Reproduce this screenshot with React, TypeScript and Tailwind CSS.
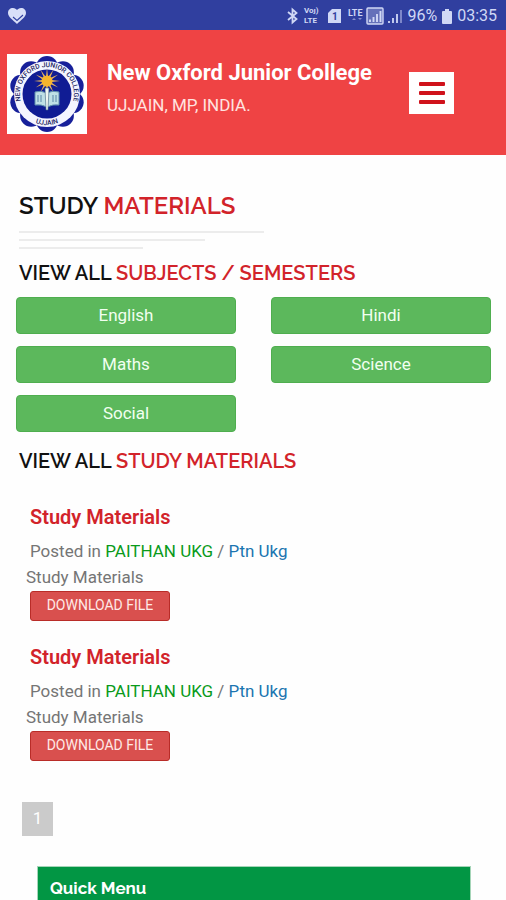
import React from "react";

const subjects = ["English", "Hindi", "Maths", "Science", "Social"];

const materials = [
  { id: 1, title: "Study Materials", group: "PAITHAN UKG", section: "Ptn Ukg", text: "Study Materials" },
  { id: 2, title: "Study Materials", group: "PAITHAN UKG", section: "Ptn Ukg", text: "Study Materials" },
];

const petals = Array.from({ length: 10 }, (_, i) => {
  const a = ((i * 36 - 90) * Math.PI) / 180;
  return { x: 40 + 27 * Math.cos(a), y: 40 + 27 * Math.sin(a) };
});

const rays = Array.from({ length: 12 }, (_, i) => i * 30);

function StatusBar() {
  return (
    <div className="flex h-[30px] items-center justify-between bg-[#303f9f] pl-2 pr-[9px] pt-[2px] text-[#d0d8f5]">
      <svg className="h-[17px] w-[18px]" viewBox="0 0 18 17" aria-hidden="true">
        <path
          d="M9 16 C5 12 0 9 0 5 C0 2 2 0 5 0 C7 0 8 1 9 2 C10 1 11 0 13 0 C16 0 18 2 18 5 C18 9 13 12 9 16Z"
          fill="#d8dff8"
        />
        <path d="M5 9 L9 12.500 L15 7" fill="none" stroke="#303f9f" strokeWidth="1.1" />
      </svg>
      <div className="flex items-center">
        <svg className="h-[18px] w-[119px] overflow-visible" viewBox="0 0 119 18" fill="none" aria-hidden="true">
          <path d="M2 5 L10.500 12 L6.500 15.500 V2.500 L10.500 6 L2 13" stroke="currentColor" strokeWidth="1.8" />
          <g fill="currentColor" fontFamily="Roboto, sans-serif" fontWeight="700">
            <text x="18" y="6" fontSize="8">Voȷ)</text>
            <text x="18" y="16" fontSize="8">LTE</text>
            <text x="62" y="9" fontSize="9">LTE</text>
          </g>
          <path d="M46 2 H55 V16 H42 V6Z" fill="currentColor" />
          <text x="46" y="13" fontSize="10" fontWeight="700" fontFamily="Roboto, sans-serif" fill="#303f9f">1</text>
          <path d="M66 13 L68 11 L70 13Z M72 11 H76 L74 13Z" fill="#8790ce" />
          <rect x="81" y="1" width="16" height="16" rx="1" fill="#6571ba" stroke="currentColor" strokeWidth="1.4" />
          <path d="M84 15 V12.500 M87.500 15 V10 M91 15 V7 M94.500 15 V4" stroke="currentColor" strokeWidth="1.9" />
          <path d="M103 16 V14 M107 16 V11 M111 16 V7" stroke="currentColor" strokeWidth="1.8" />
          <path d="M115 16 V3" stroke="#8790ce" strokeWidth="1.8" />
        </svg>
        <span className="ml-[2px] text-base leading-5">96%</span>
        <svg className="mx-[5px] h-[15px] w-[10px]" viewBox="0 0 10 15" fill="currentColor" aria-hidden="true">
          <path d="M3 0 H7 V2 H9 Q10 2 10 3 V14 Q10 15 9 15 H1 Q0 15 0 14 V3 Q0 2 1 2 H3Z" />
        </svg>
        <span className="text-base leading-5">03:35</span>
      </div>
    </div>
  );
}

function CollegeLogo() {
  return (
    <svg className="size-20 shrink-0 bg-white" viewBox="0 0 80 80" role="img" aria-label="New Oxford Junior College emblem">
      <defs>
        <path id="ringTop" d="M15.800 52 A27 27 0 1 1 64.200 52" />
        <path id="ringBottom" d="M20 63.700 A31 31 0 0 0 60 63.700" />
      </defs>
      {petals.map((p, i) => (
        <circle key={i} cx={p.x} cy={p.y} r="11" fill="#17209a" />
      ))}
      <circle cx="40" cy="40" r="33" fill="#f4f5ff" />
      <circle cx="40" cy="40" r="24.500" fill="#101c94" />
      <g fill="#20245e" fontFamily="Roboto, sans-serif" fontWeight="500" fontSize="6.800">
        <text>
          <textPath href="#ringTop" startOffset="50%" textAnchor="middle">NEW OXFORD JUNIOR COLLEGE</textPath>
        </text>
        <text>
          <textPath href="#ringBottom" startOffset="50%" textAnchor="middle">UJJAIN</textPath>
        </text>
      </g>
      <g fill="#e9b45c">
        {rays.map((r) => (
          <path key={r} d="M38.500 27 L40 14 L41.500 27Z" transform={`rotate(${r} 40 27)`} />
        ))}
      </g>
      <circle cx="40" cy="27" r="5.500" fill="#f6b52c" />
      <path d="M28 38 Q34 36 39.500 39 Q46 36 52 38 V51 Q46 50 40 53 Q34 50 28 51Z" fill="#bfe0e6" stroke="#5f8fae" strokeWidth="1" />
      <path d="M31 41 V48 M34 41 V48 M46 41 V48 M49 41 V48" stroke="#5b86a8" strokeWidth="1" />
      <path d="M38 34 H42 L41 56 H39Z" fill="#eef6f2" stroke="#41637f" strokeWidth="0.6" />
    </svg>
  );
}

function Header() {
  return (
    <header className="flex h-[125px] items-start bg-[#ef4344] pl-[7px] pr-[52px] pt-6">
      <CollegeLogo />
      <div className="ml-5 flex-1 pt-[3px] text-white">
        <h1 className="text-[22px] font-bold leading-8">New Oxford Junior College</h1>
        <p className="text-[17px] leading-8 text-[#ffe3e0]">UJJAIN, MP, INDIA.</p>
      </div>
      <button type="button" aria-label="Open menu" className="mt-[18px] flex h-[42px] w-[45px] flex-col items-center justify-center gap-[5px] bg-white">
        <span className="h-1 w-[26px] rounded-[1px] bg-[#d0121b]" />
        <span className="h-1 w-[26px] rounded-[1px] bg-[#d0121b]" />
        <span className="h-1 w-[26px] rounded-[1px] bg-[#d0121b]" />
      </button>
    </header>
  );
}

function SectionTitle({ lead, accent }: { lead: string; accent: string }) {
  return (
    <h3 className="px-[3px] font-[Raleway,Lato,sans-serif] text-xl font-semibold leading-7 text-[#111111]">
      {lead} <span className="text-[#d2232a]">{accent}</span>
    </h3>
  );
}

export default function App() {
  return (
    <div className="min-h-screen overflow-hidden bg-[#fefefe] font-[Roboto,sans-serif]">
      <StatusBar />
      <Header />
      <main className="pl-4 pr-[15px] pt-[35px]">
        <h2 className="px-[3px] font-[Raleway,Lato,sans-serif] text-2xl font-semibold leading-8 text-[#111111]">
          STUDY <span className="text-[#d2232a]">MATERIALS</span>
        </h2>
        <div className="mb-[10px] mt-[9px] flex flex-col gap-[6px] px-[3px]">
          <span className="h-[2px] w-[245px] bg-[#ececec]" />
          <span className="h-[2px] w-[186px] bg-[#ececec]" />
          <span className="h-[2px] w-[124px] bg-[#ececec]" />
        </div>
        <SectionTitle lead="VIEW ALL" accent="SUBJECTS / SEMESTERS" />
        <div className="mb-[15px] mt-[10px] grid grid-cols-2 gap-x-[35px] gap-y-3">
          {subjects.map((s) => (
            <button key={s} type="button" className="h-[37px] rounded border border-[#4fae4f] bg-[#5cb85c] text-[17px] text-[#f1fff0]">
              {s}
            </button>
          ))}
        </div>
        <SectionTitle lead="VIEW ALL" accent="STUDY MATERIALS" />
        <div className="mt-7 flex flex-col gap-[22px] px-[10px]">
          {materials.map((m) => (
            <article key={m.id} className="flex flex-col items-start px-1">
              <h4 className="text-[20px] font-semibold leading-7 text-[#d2232a]">{m.title}</h4>
              <p className="mt-[7px] text-[17px] leading-[26px] text-[#757575]">
                Posted in{" "}
                <a href="#group" className="text-[#0a9a1a]">{m.group}</a>
                {" / "}
                <a href="#section" className="text-[#1b75b0]">{m.section}</a>
              </p>
              <p className="-ml-1 text-[17px] leading-[26px] text-[#757575]">{m.text}</p>
              <button type="button" className="mt-px h-[30px] w-[140px] rounded-[3px] border border-[#b92c28] bg-[#d9504e] pb-[2px] text-sm leading-5 text-[#ffe9e6]">
                DOWNLOAD FILE
              </button>
            </article>
          ))}
        </div>
        <nav aria-label="Pages" className="mt-[41px] flex px-[6px]">
          <a href="#page-1" className="flex h-[34px] w-[31px] items-center justify-center bg-[#cbcbcb] text-[17px] text-white">
            1
          </a>
        </nav>
        <section className="ml-[21px] mr-5 mt-[30px] border border-b-0 border-[#a5d5b8] bg-[#029644] px-3 pt-[9px]">
          <h3 className="font-[Raleway,Lato,sans-serif] text-[17px] font-bold leading-6 text-white">Quick Menu</h3>
        </section>
      </main>
    </div>
  );
}
